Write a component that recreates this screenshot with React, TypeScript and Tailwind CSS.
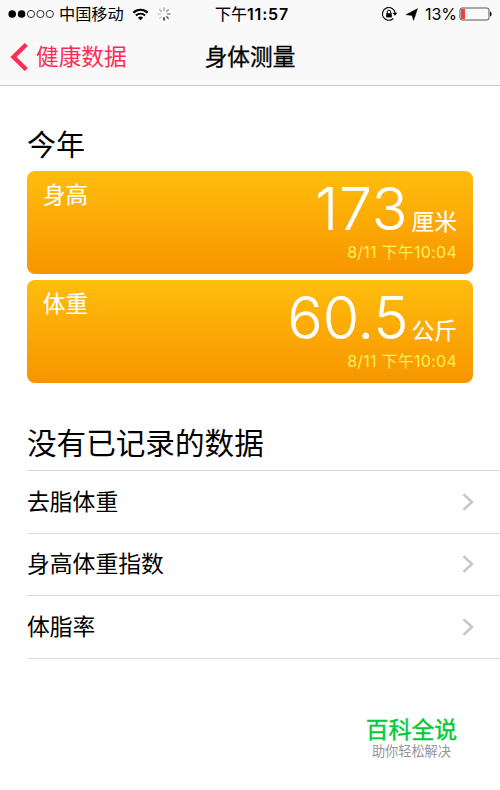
import React from 'react';
import clsx from 'clsx';

interface Measurement {
  label: string;
  value: string;
  unit: string;
  time: string;
  wide?: boolean;
}

const MEASUREMENTS: Measurement[] = [
  { label: '身高', value: '173', unit: '厘米', time: '8/11 下午10:04', wide: true },
  { label: '体重', value: '60.5', unit: '公斤', time: '8/11 下午10:04' },
];

const EMPTY_ITEMS = ['去脂体重', '身高体重指数', '体脂率'];

const SPOKES = [0, 45, 90, 135, 180, 225, 270, 315];
const SPOKE_OPACITY = [0.35, 0.4, 0.5, 0.65, 1, 0.15, 0.2, 0.3];

function WifiIcon() {
  return (
    <svg width="17" height="13" viewBox="0 0 16 13" fill="none">
      <path d="M0.9 4.7a10 10 0 0 1 14.2 0" stroke="#000" strokeWidth="2.2" />
      <path d="M3.4 7.5a6.5 6.5 0 0 1 9.2 0" stroke="#000" strokeWidth="1.9" />
      <path d="M8 12.3L5.4 9.8a3.7 3.7 0 0 1 5.2 0z" fill="#000" />
    </svg>
  );
}

function Spinner() {
  return (
    <svg width="14" height="14" viewBox="-7 -7 14 14">
      {SPOKES.map((angle, i) => (
        <line
          key={angle}
          y1="-3.2"
          y2="-6.6"
          stroke="#000"
          strokeWidth="1.3"
          opacity={SPOKE_OPACITY[i]}
          transform={`rotate(${angle})`}
        />
      ))}
    </svg>
  );
}

function StatusBar() {
  return (
    <div className="flex h-7 items-center text-[16px] leading-7">
      <div className="flex w-[215px] items-center pl-2">
        <svg width="46" height="10" viewBox="0 0 46 10">
          <circle cx="4.2" cy="5" r="3.8" />
          <circle cx="13.6" cy="5" r="3.8" />
          <circle cx="23" cy="5" r="3.6" fill="none" stroke="#000" strokeWidth="0.8" />
          <circle cx="32.4" cy="5" r="3.6" fill="none" stroke="#000" strokeWidth="0.8" />
          <circle cx="41.8" cy="5" r="3.6" fill="none" stroke="#000" strokeWidth="0.8" />
        </svg>
        <span className="ml-[5px] w-[65px] text-[16.2px] whitespace-nowrap">中国移动</span>
        <span className="ml-[8px]"><WifiIcon /></span>
        <span className="ml-[8px]"><Spinner /></span>
      </div>
      <span className="w-[166px] whitespace-nowrap">
        <span className="[-webkit-text-stroke:0.15px]">下午</span>
        <span className="font-semibold tracking-[0.8px]">11:57</span>
      </span>
      <svg width="17" height="16" viewBox="0 0 17 16" fill="none">
        <path d="M12.3 12.5A6.4 6.4 0 1 1 14.2 7" stroke="#000" strokeWidth="1.1" />
        <path d="M11.5 6.8h4.8l-2.4 3z" fill="#000" />
        <path d="M5.2 7.2h5.6v4.2H5.2z" fill="#000" />
        <path d="M6.3 7.4V5.9a1.7 1.7 0 0 1 3.4 0v1.5" stroke="#000" strokeWidth="1" />
      </svg>
      <svg className="ml-[7px]" width="14" height="13" viewBox="0 0 14 13">
        <path d="M12.6 0.6L8.6 12.4L7 7.4L0.8 6.7z" stroke="#000" strokeWidth="0.4" />
      </svg>
      <span className="ml-[6px] w-[32px] tracking-[-0.1px] whitespace-nowrap">13%</span>
      <svg className="ml-[2px]" width="34" height="14" viewBox="0 0 34 14" fill="none">
        <rect x="1" y="1" width="29" height="12" rx="2" stroke="#555" strokeWidth="1" />
        <rect x="2" y="2" width="4" height="10" fill="#fc3d39" />
        <path d="M31 4.4c2 0.8 2 4.4 0 5.2z" fill="#000" />
      </svg>
    </div>
  );
}

function MeasurementCard({ label, value, unit, time, wide }: Measurement) {
  return (
    <div className="flex h-[103px] justify-between rounded-lg bg-linear-to-b from-[#ffbd0d] to-[#f79500] pr-4 pl-4 text-white">
      <span className="mt-2 text-[22.5px] leading-8 [-webkit-text-stroke:0.15px]">{label}</span>
      <div className="flex flex-col items-end">
        <div className="flex h-[69px] items-baseline whitespace-nowrap">
          <span
            className={clsx(
              'text-[59px] leading-[76px] font-light [-webkit-text-stroke:0.2px]',
              wide && 'tracking-[0.8px]'
            )}
          >
            {value}
          </span>
          <span className="ml-[3px] text-[22.8px] [-webkit-text-stroke:0.15px]">{unit}</span>
        </div>
        <span className="text-[16px] leading-[24px] tracking-[0.25px] text-[#fff05a]">{time}</span>
      </div>
    </div>
  );
}

export default function App() {
  return (
    <div className="h-[790px] w-[500px] overflow-hidden bg-white font-['Inter','Noto_Sans_CJK_SC',sans-serif] text-black">
      <header className="h-[86px] border-b border-[#c8c8c8] bg-[#f9f9f9]">
        <StatusBar />
        <nav className="grid h-[57px] grid-cols-[1fr_auto_1fr] items-center text-[22.7px] leading-8">
          <div className="flex items-center pl-[10px] text-[#ff2d55]">
            <svg width="18" height="28" viewBox="0 0 18 28" fill="none">
              <path d="M16.3 1.5L3.5 14L16.3 26.5" stroke="currentColor" strokeWidth="4.4" />
            </svg>
            <span className="ml-2">健康数据</span>
          </div>
          <h1 className="[-webkit-text-stroke:0.3px]">身体测量</h1>
        </nav>
      </header>

      <main className="pt-[35px]">
        <h2 className="pl-[27px] text-[29px] leading-[50px]">今年</h2>
        <div className="mr-[27px] ml-[27px] flex flex-col gap-[6px]">
          {MEASUREMENTS.map(item => (
            <MeasurementCard key={item.label} {...item} />
          ))}
        </div>

        <h2 className="mt-[34px] pl-[27px] text-[29.6px] leading-[53px]">没有已记录的数据</h2>
        <ul className="ml-[27px] border-t border-[#d9d9d9]">
          {EMPTY_ITEMS.map(item => (
            <li
              key={item}
              className="flex h-[62.6px] items-center justify-between border-b border-[#d9d9d9] pr-[26px] text-[22.8px]"
            >
              {item}
              <svg width="12" height="18" viewBox="0 0 12 18" fill="none">
                <path d="M1.5 1.2L10 9L1.5 16.8" stroke="#c7c7cc" strokeWidth="2.6" />
              </svg>
            </li>
          ))}
        </ul>
      </main>

      <footer className="mt-[56px] mr-[43px] flex flex-col items-end whitespace-nowrap">
        <span className="text-[22.8px] leading-[30px] text-[#00cb34] [-webkit-text-stroke:0.4px]">百科全说</span>
        <span className="mr-[6px] text-[13.2px] leading-[13px] text-[#969696]">助你轻松解决</span>
      </footer>
    </div>
  );
}
